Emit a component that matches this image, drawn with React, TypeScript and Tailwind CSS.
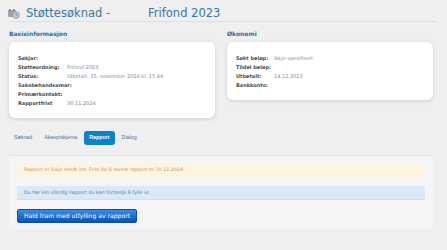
import React from 'react';

const basis: [string, string][] = [
  ['Søkjar:', ''],
  ['Støtteordning:', 'Frifond 2023'],
  ['Status:', 'Utbetalt, 15. november 2024 kl. 15:44'],
  ['Saksbehandsamar:', ''],
  ['Primærkontakt:', ''],
  ['Rapportfrist', '30.11.2024'],
];

const okonomi: [string, string][] = [
  ['Søkt beløp:', 'Ikkje spesifisert'],
  ['Tildel beløp:', ''],
  ['Utbetalt:', '14.12.2023'],
  ['Bankkonto:', ''],
];

const tabs = ['Søknad', 'Akseptskjema', 'Rapport', 'Dialog'];

function InfoCard({ title, rows, labelW }: { title: string; rows: [string, string][]; labelW: string }) {
  return (
    <div className="flex flex-col">
      <h2 className="text-[6px] font-bold text-[#2d6f9f] leading-[8px] h-[12px]">{title}</h2>
      <div className="bg-white rounded-[6px] shadow-[0_1px_4px_rgba(0,0,0,0.14)] px-[9px] pt-[12px] pb-[10px]">
        {rows.map(([label, value]) => (
          <div key={label} className="flex h-[9px] items-center text-[5px]">
            <span className={`${labelW} font-bold text-[#4a4a4a]`}>{label}</span>
            <span className="text-[#8a8a8a]">{value}</span>
          </div>
        ))}
      </div>
    </div>
  );
}

export default function App() {
  return (
    <div className="w-[447px] h-[250px] bg-[#efefef] overflow-hidden" style={{ fontFamily: '"DejaVu Sans", Verdana, sans-serif' }}>
      <div className="px-[9px] pt-[6px]">
        {/* header */}
        <div className="flex items-center h-[16px] w-[428px] border-b border-[#e0e0e0]">
          <svg width="12" height="10" viewBox="0 0 12 10" className="ml-[-1px] mr-[6px]">
            <rect x="0" y="1" width="8" height="7" rx="1" fill="#9aa3ab" />
            <rect x="1" y="0" width="1.5" height="2" fill="#7d868e" />
            <rect x="5" y="0" width="1.5" height="2" fill="#7d868e" />
            <circle cx="8" cy="6" r="3.4" fill="#c4cad0" stroke="#8f989f" strokeWidth="0.8" />
            <path d="M8 4.3 V6 H9.4" stroke="#6b747b" strokeWidth="0.7" fill="none" />
          </svg>
          <span className="text-[11.5px] text-[#3677aa] leading-none">Støttesøknad -</span>
          <span className="text-[11.5px] text-[#3677aa] leading-none ml-[38px]">Frifond 2023</span>
        </div>

        {/* info cards */}
        <div className="grid grid-cols-2 gap-[12px] w-[424px] mt-[8px] items-start">
          <InfoCard title="Basisinformasjon" rows={basis} labelW="w-[49px]" />
          <InfoCard title="Økonomi" rows={okonomi} labelW="w-[38px]" />
        </div>

        {/* tabs */}
        <div className="flex items-center gap-[2px] mt-[13px] h-[14px] text-[5.3px] text-[#4f6f8f]" style={{ fontFamily: '"Liberation Sans", Arial, sans-serif' }}>
          {tabs.map(t => (
            <button
              key={t}
              className={t === 'Rapport'
                ? 'px-[5px] h-[14px] rounded-[3px] bg-[#0b82cb] text-white font-bold'
                : 'px-[5px] h-[14px]'}>
              {t}
            </button>
          ))}
        </div>

        {/* report panel */}
        <div className="w-[424px] h-[74px] mt-[10px] bg-[#f5f5f5] border-t border-[#e6e6e6] px-[8px] pt-[7px]">
          <div className="h-[14px] flex items-center px-[7px] bg-[#fdf5e2] text-[4.8px] text-[#c19a55]">
            Rapport er ikkje sendt inn. Frist for å levere rapport er 30.11.2024.
          </div>
          <div className="h-[14px] flex items-center px-[7px] mt-[9px] bg-[#d9eaf6] border-b border-[#cfe1ee] text-[4.8px] text-[#4785b5]">
            Du har ein uferdig rapport du kan fortsetje å fylle ut
          </div>
          <button className="mt-[9px] h-[14px] px-[6px] rounded-[2px] border border-[#0b4fa8] bg-gradient-to-b from-[#3a8ce6] to-[#0654b8] text-white text-[6.1px] leading-none">
            Hald fram med utfylling av rapport
          </button>
        </div>
      </div>
    </div>
  );
}
